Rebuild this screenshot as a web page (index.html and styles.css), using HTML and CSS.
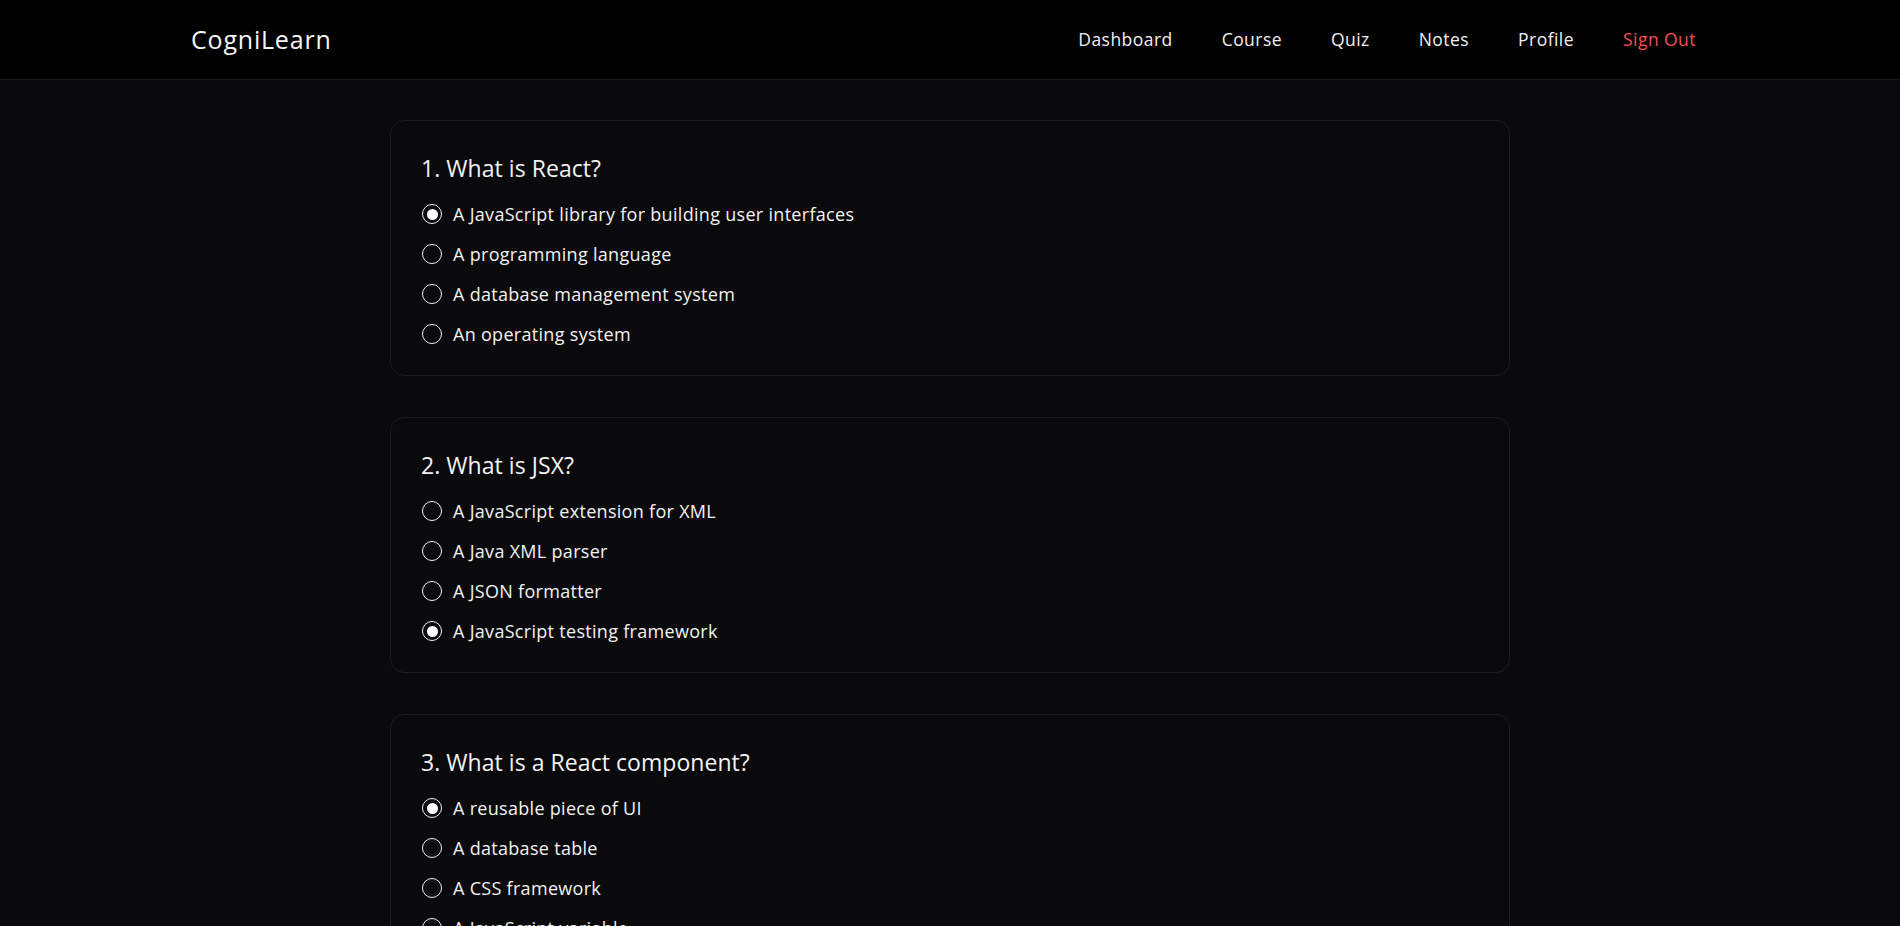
FILE: index.html
```html
<!DOCTYPE html>
<html lang="en">
<head>
<meta charset="utf-8">
<title>CogniLearn – Quiz</title>
<link rel="stylesheet" href="styles.css">
</head>
<body>
<header class="topbar">
  <div class="logo">CogniLearn</div>
  <nav class="nav">
    <a class="nav-link" href="#">Dashboard</a>
    <a class="nav-link" href="#">Course</a>
    <a class="nav-link" href="#">Quiz</a>
    <a class="nav-link" href="#">Notes</a>
    <a class="nav-link" href="#">Profile</a>
    <a class="nav-link nav-signout" href="#">Sign Out</a>
  </nav>
</header>
<main class="quiz">
  <section class="card">
    <h3 class="question">1. What is React?</h3>
    <div class="options">
      <label class="option"><input type="radio" name="q1" checked><span>A JavaScript library for building user interfaces</span></label>
      <label class="option"><input type="radio" name="q1"><span>A programming language</span></label>
      <label class="option"><input type="radio" name="q1"><span>A database management system</span></label>
      <label class="option"><input type="radio" name="q1"><span>An operating system</span></label>
    </div>
  </section>
  <section class="card">
    <h3 class="question">2. What is JSX?</h3>
    <div class="options">
      <label class="option"><input type="radio" name="q2"><span>A JavaScript extension for XML</span></label>
      <label class="option"><input type="radio" name="q2"><span>A Java XML parser</span></label>
      <label class="option"><input type="radio" name="q2"><span>A JSON formatter</span></label>
      <label class="option"><input type="radio" name="q2" checked><span>A JavaScript testing framework</span></label>
    </div>
  </section>
  <section class="card">
    <h3 class="question">3. What is a React component?</h3>
    <div class="options">
      <label class="option"><input type="radio" name="q3" checked><span>A reusable piece of UI</span></label>
      <label class="option"><input type="radio" name="q3"><span>A database table</span></label>
      <label class="option"><input type="radio" name="q3"><span>A CSS framework</span></label>
      <label class="option"><input type="radio" name="q3"><span>A JavaScript variable</span></label>
    </div>
  </section>
</main>
</body>
</html>
```

FILE: styles.css
```css
* { box-sizing: border-box; }

html, body {
  margin: 0;
  padding: 0;
  background: #0a0a0c;
  color: #f2f2f2;
  font-family: "Open Sans", "Noto Sans", sans-serif;
}

.topbar {
  height: 80px;
  background: #000;
  border-bottom: 1px solid #1c1c20;
  display: flex;
  align-items: center;
  justify-content: space-between;
  padding: 0 204px 2px 191px;
}

.logo {
  font-size: 25px;
  letter-spacing: 0.8px;
  color: #f5f5f5;
}

.nav {
  display: flex;
  align-items: center;
  gap: 49px;
}

.nav-link {
  color: #f0f0f0;
  text-decoration: none;
  font-size: 17.5px;
  letter-spacing: 0.45px;
}

.nav-signout { color: #f64c56; }

.quiz {
  display: flex;
  flex-direction: column;
  align-items: center;
  gap: 41px;
  padding: 40px 0 40px;
}

.card {
  width: 1120px;
  height: 256px;
  border: 1px solid #1d1d21;
  border-radius: 14px;
  background: #0a0a0c;
  padding: 30px 30px 26px;
}

.question {
  margin: 0 0 14px;
  font-size: 23px;
  font-weight: 400;
  line-height: 34px;
  letter-spacing: 0.05px;
}

.options {
  display: flex;
  flex-direction: column;
  gap: 10px;
}

.option {
  display: flex;
  align-items: center;
  gap: 11px;
  height: 30px;
  font-size: 18px;
  letter-spacing: 0.3px;
  cursor: pointer;
}

.option input {
  appearance: none;
  -webkit-appearance: none;
  margin: 0 0 0 1px;
  width: 20px;
  height: 20px;
  border: 1.5px solid #f2f2f2;
  border-radius: 50%;
  background: transparent;
  flex: none;
  display: grid;
  place-items: center;
}

.option input:checked::after {
  content: "";
  width: 11px;
  height: 11px;
  border-radius: 50%;
  background: #ffffff;
}
```
